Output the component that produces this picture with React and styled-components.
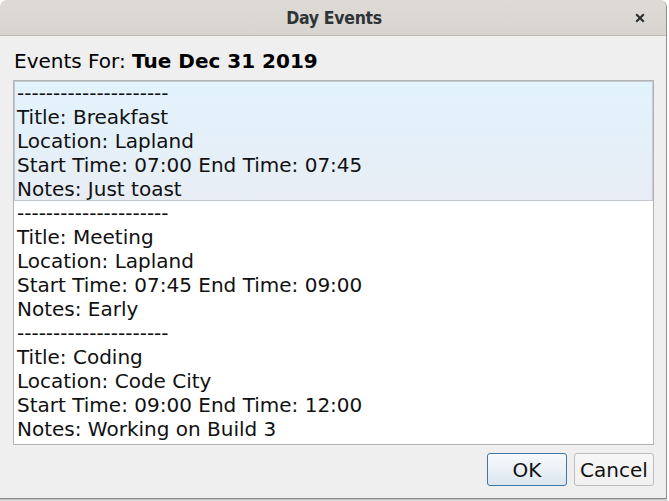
import React from "react";
import styled, { createGlobalStyle } from "styled-components";

const Global = createGlobalStyle`
  html, body { margin: 0; padding: 0; background: #ffffff; }
  body { font-family: "DejaVu Sans", sans-serif; }
`;

const Frame = styled.div`
  width: 669px;
  height: 501px;
  overflow: hidden;
`;

const Window = styled.div`
  width: 666px;
  height: 498px;
  display: flex;
  flex-direction: column;
  background: #efefef;
  border-right: 1px solid #8f8f8f;
  border-bottom: 1px solid #8a8a8a;
  border-radius: 7px 7px 0 0;
  box-shadow: 0 1px 0 #c4c4c4, 0 2px 0 #dcdcdc;
  overflow: hidden;
`;

const TitleBar = styled.div`
  height: 35px;
  flex: none;
  border-bottom: 1px solid #bdb9b4;
  background: linear-gradient(#dedbd7, #d8d4d0);
  display: flex;
  align-items: center;
  justify-content: center;
  position: relative;
`;

const TitleText = styled.div`
  font-family: "DejaVu Sans Condensed", "DejaVu Sans", sans-serif;
  font-weight: bold;
  font-size: 17.5px;
  color: #2e3436;
  letter-spacing: -0.3px;
  margin-left: 2px;
`;

const CloseButton = styled.div`
  position: absolute;
  right: 21px;
  top: 13px;
  width: 10px;
  height: 10px;
  display: flex;
`;

const Body = styled.div`
  flex: 1;
  display: flex;
  flex-direction: column;
  padding: 13px 12px 14px 13px;
`;

const Header = styled.div`
  font-size: 20px;
  line-height: 24px;
  color: #000;
  padding-left: 1px;
  margin-bottom: 7px;
`;

const Bold = styled.span`
  font-weight: bold;
`;

const List = styled.div`
  height: 363px;
  flex: none;
  border: 1px solid #b3b3b3;
  background: #fff;
  overflow: hidden;
`;

const Item = styled.div`
  height: 120px;
  padding-left: 3px;
  box-sizing: border-box;
  font-size: 20px;
  line-height: 24px;
  color: #111;
  background: ${(p) =>
    p.$selected ? "linear-gradient(#e2f3fd, #e8edf4)" : "transparent"};
  box-shadow: ${(p) => (p.$selected ? "inset 0 0 0 1px #c2c9cf" : "none")};
`;

const Line = styled.div`
  white-space: pre;
`;

const Buttons = styled.div`
  display: flex;
  justify-content: flex-end;
  gap: 7px;
  margin-top: 8px;
`;

const Button = styled.div`
  width: 80px;
  height: 33px;
  box-sizing: border-box;
  border-radius: 3px;
  display: flex;
  align-items: center;
  justify-content: center;
  font-size: 20px;
  color: #111;
  border: 1px solid ${(p) => (p.$primary ? "#3f76a5" : "#bdbdbd")};
  background: ${(p) =>
    p.$primary
      ? "linear-gradient(#f7fafd, #dce6ef)"
      : "linear-gradient(#f7f7f7, #f0f0f0)"};
`;

const events = [
  {
    title: "Breakfast",
    location: "Lapland",
    start: "07:00",
    end: "07:45",
    notes: "Just toast",
  },
  {
    title: "Meeting",
    location: "Lapland",
    start: "07:45",
    end: "09:00",
    notes: "Early",
  },
  {
    title: "Coding",
    location: "Code City",
    start: "09:00",
    end: "12:00",
    notes: "Working on Build 3",
  },
];

export default function App() {
  return (
    <Frame>
      <Global />
      <Window>
        <TitleBar>
          <TitleText>Day Events</TitleText>
          <CloseButton>
            <svg width="10" height="10" viewBox="0 0 10 10">
              <path
                d="M1.2 1.2 L8.8 8.8 M8.8 1.2 L1.2 8.8"
                stroke="#2e3436"
                strokeWidth="2.2"
                strokeLinecap="butt"
              />
            </svg>
          </CloseButton>
        </TitleBar>
        <Body>
          <Header>
            Events For: <Bold>Tue Dec 31 2019</Bold>
          </Header>
          <List>
            {events.map((e, i) => (
              <Item key={i} $selected={i === 0}>
                <Line>---------------------</Line>
                <Line>Title: {e.title}</Line>
                <Line>Location: {e.location}</Line>
                <Line>
                  Start Time: {e.start} End Time: {e.end}
                </Line>
                <Line>Notes: {e.notes}</Line>
              </Item>
            ))}
          </List>
          <Buttons>
            <Button $primary>OK</Button>
            <Button>Cancel</Button>
          </Buttons>
        </Body>
      </Window>
    </Frame>
  );
}
